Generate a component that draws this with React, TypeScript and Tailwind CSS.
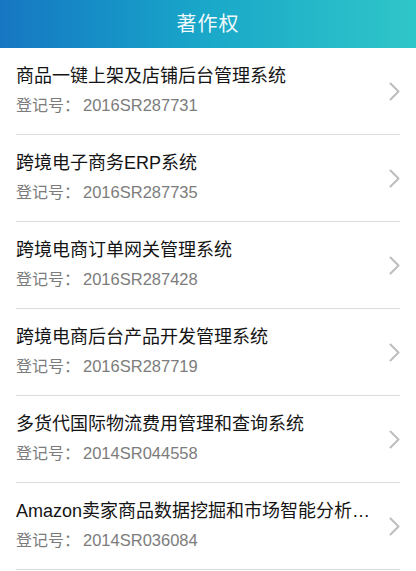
const items = [
  { name: "商品一键上架及店铺后台管理系统", no: "2016SR287731" },
  { name: "跨境电子商务ERP系统", no: "2016SR287735" },
  { name: "跨境电商订单网关管理系统", no: "2016SR287428" },
  { name: "跨境电商后台产品开发管理系统", no: "2016SR287719" },
  { name: "多货代国际物流费用管理和查询系统", no: "2014SR044558" },
  { name: "Amazon卖家商品数据挖掘和市场智能分析系统", no: "2014SR036084" },
];

function Chevron() {
  return (
    <svg className="w-[11px] h-[19px] shrink-0" viewBox="0 0 11 19" fill="none">
      <path d="M1.5 1.5 L9.5 9.5 L1.5 17.5" stroke="#bdbdbd" strokeWidth="2" strokeLinecap="round" strokeLinejoin="round" />
    </svg>
  );
}

export default function App() {
  return (
    <div
      className="w-[416px] h-[571px] overflow-hidden bg-white"
      style={{ fontFamily: '"Liberation Sans", "Noto Sans CJK SC", sans-serif' }}
    >
      <header className="h-[48px] flex items-center justify-center bg-gradient-to-r from-[#1776c2] via-[#1aa8c9] to-[#2fc6c8]">
        <h1 className="text-[20px] text-white/95 tracking-[1px]">著作权</h1>
      </header>
      <ul>
        {items.map((it) => (
          <li key={it.no} className="h-[87px] mx-4 border-b border-[#dcdcdc] flex items-center">
            <div className="flex-1 min-w-0 pr-[17px] -mt-[2px]">
              <div className="text-[18px] leading-[26px] text-[#141414] truncate">{it.name}</div>
              <div className="mt-[4px] text-[16px] leading-[24px] text-[#7c7c7c]">
                登记号：<span className="ml-[3px] text-[16.5px]">{it.no}</span>
              </div>
            </div>
            <Chevron />
          </li>
        ))}
      </ul>
    </div>
  );
}
